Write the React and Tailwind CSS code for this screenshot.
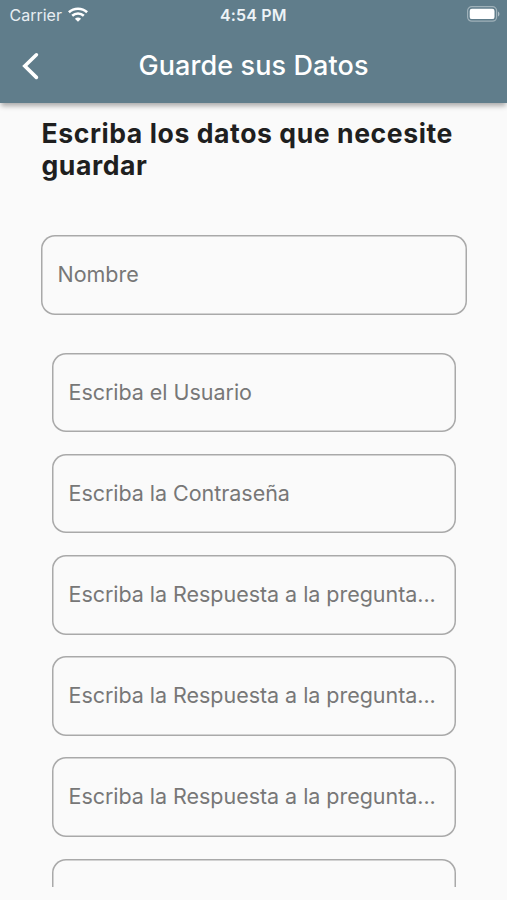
const questionLabel = 'Escriba la Respuesta a la pregunta...';

const fields = [
  'Escriba el Usuario',
  'Escriba la Contraseña',
  questionLabel,
  questionLabel,
  questionLabel,
  '',
];

function WifiIcon() {
  return (
    <svg className="w-5 h-[15px]" viewBox="0 0 20 15" fill="none" stroke="#fff" strokeWidth="2.6">
      <path d="M.9 5.3C6 .6 14 .6 19.1 5.3" />
      <path d="M4.2 8.8c3.3-3 8.3-3 11.6 0" />
      <path d="M10 14.7 6.9 11.7c1.7-1.6 4.5-1.6 6.2 0Z" fill="#fff" stroke="none" />
    </svg>
  );
}

function BatteryIcon() {
  return (
    <svg className="w-[33px] h-4" viewBox="0 0 33 16" fill="none">
      <rect x="0.6" y="0.6" width="29" height="14.6" rx="4.2" stroke="#fff" strokeOpacity="0.4" strokeWidth="1.2" />
      <rect x="2.7" y="2.7" width="24.8" height="10.4" rx="2.2" fill="#fff" />
      <path d="M31 5.4c1.9.8 1.9 4.2 0 5Z" fill="#fff" fillOpacity="0.5" />
    </svg>
  );
}

function Field({ label }) {
  return (
    <div className="flex items-center h-[79.6px] shrink-0 px-[16.5px] pb-[1.2px] rounded-[14px] shadow-[inset_0_0_0_1.5px_#a9a9a9]">
      <span className="text-[21.5px] tracking-[-0.04px] text-[#777] whitespace-nowrap">{label}</span>
    </div>
  );
}

export default function App() {
  return (
    <div className="flex flex-col w-[507px] h-[900px] overflow-hidden bg-[#fafafa] font-['Inter',sans-serif]">
      <header className="relative z-10 flex flex-col h-[103px] shrink-0 bg-[#607d8b] text-white shadow-[0_4px_5px_-1px_rgba(0,0,0,0.32)]">
        <div className="grid grid-cols-[1fr_auto_1fr] items-center h-[29px] pl-[9.5px] pr-[7px]">
          <div className="flex items-center gap-[6px]">
            <span className="text-[16px] text-[#e8eef2]">Carrier</span>
            <WifiIcon />
          </div>
          <span className="text-center text-[16px] font-semibold tracking-[0.15px] text-[#edf3f7] -ml-[3px]">4:54 PM</span>
          <div className="flex justify-end pb-[2px]">
            <BatteryIcon />
          </div>
        </div>
        <div className="grid grid-cols-[60px_1fr_60px] items-center h-[74px]">
          <svg className="ml-[21px] w-[18px] h-[28px]" viewBox="0 0 18 28" fill="none" stroke="#fff" strokeWidth="3.6" strokeLinecap="round">
            <path d="M15.4 2.8 3.8 14l11.6 11.4" />
          </svg>
          <h1 className="text-center text-[27px] font-medium tracking-[0.1px]">Guarde sus Datos</h1>
        </div>
      </header>

      <main className="flex flex-col h-[784px] shrink-0 overflow-hidden pl-[41px] pr-[40px] pt-[14px]">
        <h2 className="h-[118px] shrink-0 pl-[0.5px] text-[26.6px] leading-[32.3px] tracking-[0.57px] font-bold text-[#1f1f1f]">
          Escriba los datos que necesite guardar
        </h2>
        <Field label="Nombre" />
        <div className="flex flex-col gap-[21.6px] mt-[38px] px-[11px]">
          {fields.map((label, i) => (
            <Field key={i} label={label} />
          ))}
        </div>
      </main>
    </div>
  );
}
